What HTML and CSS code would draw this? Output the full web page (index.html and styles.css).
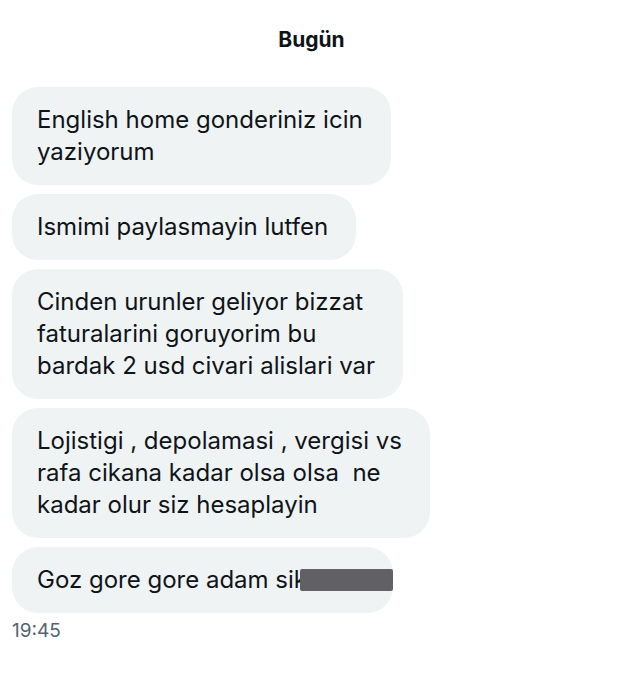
FILE: index.html
```html
<!DOCTYPE html>
<html lang="tr">
<head>
<meta charset="utf-8">
<title>Bugün</title>
<link rel="stylesheet" href="styles.css">
</head>
<body>
<div class="chat">
  <div class="day">Bugün</div>
  <div class="messages">
    <div class="bubble">English home gonderiniz icin<br>yaziyorum</div>
    <div class="bubble">Ismimi paylasmayin lutfen</div>
    <div class="bubble">Cinden urunler geliyor bizzat<br>faturalarini goruyorim bu<br>bardak 2 usd civari alislari var</div>
    <div class="bubble">Lojistigi , depolamasi , vergisi vs<br>rafa cikana kadar olsa olsa&nbsp; ne<br>kadar olur siz hesaplayin</div>
    <div class="bubble last">Goz gore gore adam sik<span class="redact"></span></div>
  </div>
  <div class="time">19:45</div>
</div>
</body>
</html>
```

FILE: styles.css
```css
html, body {
  margin: 0;
  padding: 0;
  background: #ffffff;
}
body {
  font-family: Inter, "Noto Sans", "Liberation Sans", sans-serif;
  color: #0f1419;
}
.chat {
  padding: 27px 12px 0;
}
.day {
  text-align: center;
  font-weight: 700;
  font-size: 21px;
  line-height: 26px;
  margin-bottom: 34px;
}
.messages {
  display: flex;
  flex-direction: column;
  align-items: flex-start;
  gap: 9px;
}
.bubble {
  background: #eff3f4;
  border-radius: 26px;
  padding: 17px 28px 17px 25px;
  font-size: 24px;
  line-height: 32px;
  white-space: nowrap;
}
.redact {
  display: inline-block;
  width: 93px;
  height: 22px;
  margin-left: -7px;
  margin-right: -28px;
  vertical-align: -3px;
  background: #616165;
  border-radius: 2px;
}
.time {
  margin-top: 7px;
  font-size: 19px;
  line-height: 22px;
  color: #536471;
}
```
